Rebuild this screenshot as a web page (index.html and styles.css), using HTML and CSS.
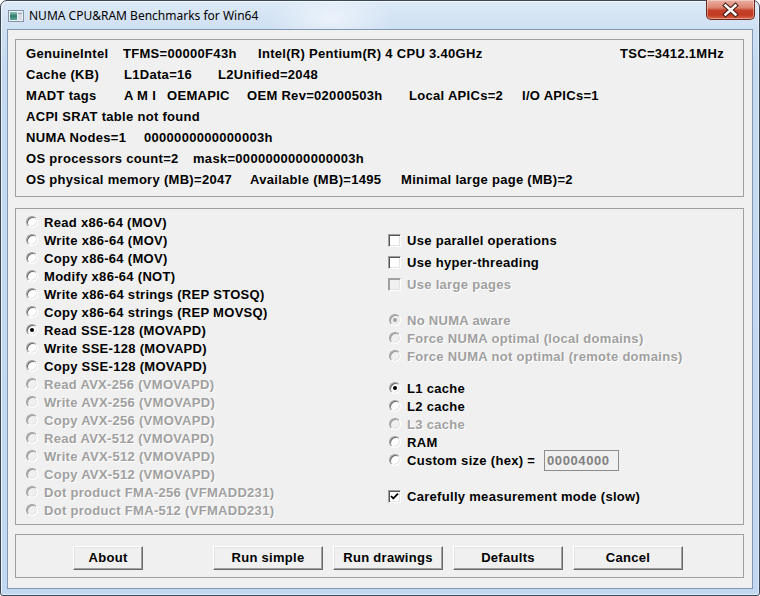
FILE: index.html
```html
<!DOCTYPE html>
<html>
<head>
<meta charset="utf-8">
<title>NUMA CPU&amp;RAM Benchmarks for Win64</title>
<link rel="stylesheet" href="styles.css">
</head>
<body>
<div class="window">
  <div class="titlebar">
    <svg class="app-icon" width="16" height="12" viewBox="0 0 16 12">
      <defs>
        <linearGradient id="ig" x1="0" y1="0" x2="0" y2="1">
          <stop offset="0" stop-color="#8fc7b5"/>
          <stop offset="0.5" stop-color="#2f7c70"/>
          <stop offset="1" stop-color="#5fa898"/>
        </linearGradient>
      </defs>
      <rect x="0.5" y="0.5" width="15" height="11" fill="#eef2f6" stroke="#8193a6"/>
      <rect x="2" y="2" width="7" height="8" fill="url(#ig)"/>
      <rect x="10" y="2" width="4" height="8" fill="#d7dee6"/>
      <rect x="10" y="3" width="4" height="1" fill="#9aa7b5"/>
    </svg>
    <span class="title">NUMA CPU&amp;RAM Benchmarks for Win64</span>
    <div class="close">
      <svg width="49" height="20" viewBox="0 0 49 20">
        <path d="M19.5 5.5 L29.5 14.5 M29.5 5.5 L19.5 14.5" stroke="#4b1f17" stroke-width="4.6" stroke-linecap="square"/>
        <path d="M19.5 5.5 L29.5 14.5 M29.5 5.5 L19.5 14.5" stroke="#ffffff" stroke-width="2.4" stroke-linecap="square"/>
      </svg>
    </div>
  </div>

  <div class="client">
    <div class="panel info">
      <div class="line"><span class="w97">GenuineIntel</span><span class="w135">TFMS=00000F43h</span><span class="w362">Intel(R) Pentium(R) 4 CPU 3.40GHz</span><span>TSC=3412.1MHz</span></div>
      <div class="line"><span class="w98">Cache (KB)</span><span class="w94">L1Data=16</span><span>L2Unified=2048</span></div>
      <div class="line"><span class="w98">MADT tags</span><span class="w43">A M I</span><span class="w80">OEMAPIC</span><span class="w162">OEM Rev=02000503h</span><span class="w113">Local APICs=2</span><span>I/O APICs=1</span></div>
      <div class="line"><span>ACPI SRAT table not found</span></div>
      <div class="line"><span class="w118">NUMA Nodes=1</span><span>0000000000000003h</span></div>
      <div class="line"><span class="w167">OS processors count=2</span><span>mask=0000000000000003h</span></div>
      <div class="line"><span class="w224">OS physical memory (MB)=2047</span><span class="w151">Available (MB)=1495</span><span>Minimal large page (MB)=2</span></div>
    </div>

    <div class="panel options">
      <div class="col-left">
        <div class="opt"><span class="radio"></span>Read x86-64 (MOV)</div>
        <div class="opt"><span class="radio"></span>Write x86-64 (MOV)</div>
        <div class="opt"><span class="radio"></span>Copy x86-64 (MOV)</div>
        <div class="opt"><span class="radio"></span>Modify x86-64 (NOT)</div>
        <div class="opt"><span class="radio"></span>Write x86-64 strings (REP STOSQ)</div>
        <div class="opt"><span class="radio"></span>Copy x86-64 strings (REP MOVSQ)</div>
        <div class="opt"><span class="radio on"></span>Read SSE-128 (MOVAPD)</div>
        <div class="opt"><span class="radio"></span>Write SSE-128 (MOVAPD)</div>
        <div class="opt"><span class="radio"></span>Copy SSE-128 (MOVAPD)</div>
        <div class="opt dis"><span class="radio"></span>Read AVX-256 (VMOVAPD)</div>
        <div class="opt dis"><span class="radio"></span>Write AVX-256 (VMOVAPD)</div>
        <div class="opt dis"><span class="radio"></span>Copy AVX-256 (VMOVAPD)</div>
        <div class="opt dis"><span class="radio"></span>Read AVX-512 (VMOVAPD)</div>
        <div class="opt dis"><span class="radio"></span>Write AVX-512 (VMOVAPD)</div>
        <div class="opt dis"><span class="radio"></span>Copy AVX-512 (VMOVAPD)</div>
        <div class="opt dis"><span class="radio"></span>Dot product FMA-256 (VFMADD231)</div>
        <div class="opt dis"><span class="radio"></span>Dot product FMA-512 (VFMADD231)</div>
      </div>
      <div class="col-right">
        <div class="chk-row first"><span class="check"></span>Use parallel operations</div>
        <div class="chk-row"><span class="check"></span>Use hyper-threading</div>
        <div class="chk-row dis"><span class="check"></span>Use large pages</div>

        <div class="opt r dis group-gap"><span class="radio on"></span>No NUMA aware</div>
        <div class="opt r dis"><span class="radio"></span>Force NUMA optimal (local domains)</div>
        <div class="opt r dis"><span class="radio"></span>Force NUMA not optimal (remote domains)</div>

        <div class="opt r cache-gap"><span class="radio on"></span>L1 cache</div>
        <div class="opt r"><span class="radio"></span>L2 cache</div>
        <div class="opt r dis"><span class="radio"></span>L3 cache</div>
        <div class="opt r"><span class="radio"></span>RAM</div>
        <div class="opt r"><span class="radio"></span><span class="custom-label">Custom size (hex) =</span><span class="edit">00004000</span></div>

        <div class="chk-row careful"><span class="check checked"><svg width="11" height="11" viewBox="0 0 11 11"><path d="M2 5 L4.3 7.4 L9 2.6" fill="none" stroke="#000" stroke-width="1.8"/></svg></span>Carefully measurement mode (slow)</div>
      </div>
    </div>

    <div class="panel buttons">
      <button class="btn about">About</button>
      <button class="btn">Run simple</button>
      <button class="btn">Run drawings</button>
      <button class="btn">Defaults</button>
      <button class="btn">Cancel</button>
    </div>
  </div>
</div>
</body>
</html>
```

FILE: styles.css
```css
* { box-sizing: border-box; }
html, body { margin: 0; padding: 0; }
body {
  width: 760px;
  height: 596px;
  overflow: hidden;
  background: #ffffff;
  font-family: "Liberation Sans", Arial, sans-serif;
}

.window {
  width: 760px;
  height: 596px;
  border: 1px solid #39475a;
  border-radius: 7px 7px 3px 3px;
  background:
    radial-gradient(ellipse 90px 40px at 330px 18px, rgba(255,255,255,0.55), rgba(255,255,255,0) 70%),
    linear-gradient(to bottom, #dce9f7 0px, #cfe0f3 28px, #c5daf1 60px, #c2d8f0 100%);
  display: flex;
  flex-direction: column;
  box-shadow: inset 1px 1px 0 rgba(255,255,255,0.7), inset -1px -1px 0 rgba(255,255,255,0.5);
}

.titlebar {
  height: 28px;
  display: flex;
  align-items: center;
  padding-left: 7px;
  flex: none;
}
.app-icon { flex: none; margin-top: 1px; }
.title {
  margin-left: 5px;
  font-family: "Noto Sans", "Open Sans", sans-serif;
  font-size: 12px;
  color: #000;
  margin-top: 1px;
}
.close {
  margin-left: auto;
  margin-right: 4px;
  align-self: flex-start;
  margin-top: -1px;
  width: 49px;
  height: 20px;
  border: 1px solid #6e2a1d;
  border-top: none;
  border-radius: 0 0 5px 5px;
  background: linear-gradient(to bottom, #eab0a2 0%, #dc8571 40%, #c4402a 55%, #c23b22 80%, #d8694c 100%);
  box-shadow: inset 0 0 0 1px rgba(255,255,255,0.35);
  position: relative;
  overflow: hidden;
}
.close svg { position: absolute; left: -1px; top: 0; }

.client {
  flex: 1;
  margin: 0 6px 6px 6px;
  border: 1px solid #8398b0;
  background: #f0f0f0;
  padding: 9px 8px 10px 7px;
  display: flex;
  flex-direction: column;
  font-weight: bold;
  font-size: 13px;
  letter-spacing: 0.3px;
  color: #000;
}

.panel {
  border: 1px solid #a0a0a0;
  flex: none;
}

.info {
  height: 158px;
  padding: 3px 10px 0 10px;
}
.line {
  display: flex;
  height: 21px;
  line-height: 21px;
  white-space: nowrap;
}
.w43 { width: 43px; }
.w80 { width: 80px; }
.w94 { width: 94px; }
.w97 { width: 97px; }
.w98 { width: 98px; }
.w113 { width: 113px; }
.w118 { width: 118px; }
.w135 { width: 135px; }
.w151 { width: 151px; }
.w162 { width: 162px; }
.w167 { width: 167px; }
.w224 { width: 224px; }
.w362 { width: 362px; }

.options {
  margin-top: 11px;
  height: 317px;
  padding: 4px 0 0 10px;
  display: grid;
  grid-template-columns: 362px 1fr;
}
.col-left, .col-right { display: flex; flex-direction: column; }

.opt {
  display: flex;
  align-items: center;
  height: 18px;
  white-space: nowrap;
}
.opt.r .radio { margin-left: 1px; }
.dis { color: #a0a0a0; text-shadow: 1px 1px 0 #ffffff; }

.radio {
  flex: none;
  width: 12px;
  height: 12px;
  border-radius: 50%;
  border: 1px solid;
  border-color: #a0a0a0 #ffffff #ffffff #a0a0a0;
  box-shadow: inset 1px 1px 0 #696969, inset -1px -1px 0 #e3e3e3;
  background: #ffffff;
  position: relative;
  margin-right: 6px;
}
.radio.on::after {
  content: "";
  position: absolute;
  left: 3px;
  top: 3px;
  width: 4px;
  height: 4px;
  border-radius: 50%;
  background: #000;
}
.dis .radio { background: #f0f0f0; box-shadow: inset 1px 1px 0 #a0a0a0, inset -1px -1px 0 #e3e3e3; }
.dis .radio.on::after { background: #a0a0a0; }

.chk-row {
  display: flex;
  align-items: center;
  height: 22px;
  white-space: nowrap;
}
.chk-row.first { margin-top: 16px; }
.check {
  flex: none;
  width: 13px;
  height: 13px;
  border: 1px solid;
  border-color: #a0a0a0 #ffffff #ffffff #a0a0a0;
  box-shadow: inset 1px 1px 0 #555555, inset -1px -1px 0 #e3e3e3;
  background: #ffffff;
  margin-right: 6px;
  position: relative;
}
.check svg { position: absolute; left: 0; top: 0; }
.dis .check { background: #f0f0f0; box-shadow: inset 1px 1px 0 #a0a0a0, inset -1px -1px 0 #e3e3e3; }

.group-gap { margin-top: 16px; }
.cache-gap { margin-top: 14px; }
.careful { margin-top: 16px; }

.custom-label { width: 137px; flex: none; }
.edit {
  flex: none;
  width: 75px;
  height: 21px;
  border: 1px solid #8c8c8c;
  background: #f0f0f0;
  color: #808080;
  padding-left: 2px;
  line-height: 19px;
  letter-spacing: 0.6px;
}

.buttons {
  margin-top: 9px;
  height: 44px;
  padding: 11px 0 0 57px;
  display: flex;
  align-items: flex-start;
  gap: 10px;
}
.btn {
  height: 24px;
  width: 110px;
  padding: 0 0 1px 0;
  margin: 0;
  font: inherit;
  letter-spacing: 0.3px;
  color: #000;
  background: #f0f0f0;
  border: 1px solid;
  border-color: #ffffff #696969 #696969 #ffffff;
  box-shadow: inset -1px -1px 0 #a0a0a0, inset 1px 1px 0 #e3e3e3;
  border-radius: 0;
}
.btn.about { width: 70px; margin-right: 60px; }
```
